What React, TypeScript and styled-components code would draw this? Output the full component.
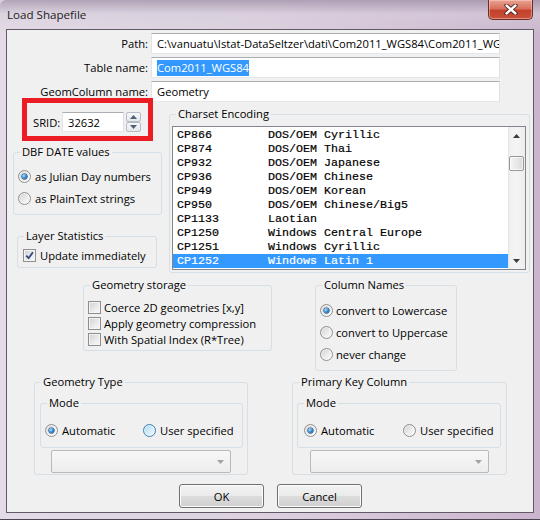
import React from 'react';
import styled, { createGlobalStyle, css } from 'styled-components';

const GlobalStyle = createGlobalStyle`
  html, body {
    margin: 0;
    padding: 0;
    background: #d9cfdc;
  }
  body {
    font-family: "Open Sans", "Noto Sans", "Liberation Sans", sans-serif;
    font-size: 11.2px;
    color: #000;
  }
  * {
    box-sizing: border-box;
  }
`;

const Window = styled.div`
  width: 540px;
  height: 520px;
  display: flex;
  flex-direction: column;
  padding: 0 6px 6px;
  border-bottom: 1px solid #4d4452;
  border-top-left-radius: 6px;
  background:
    linear-gradient(180deg, rgba(160, 145, 168, 0.75) 0, rgba(214, 206, 218, 0.55) 14px, rgba(0, 0, 0, 0) 34px),
    linear-gradient(90deg, #e4dbe7 0, #dcd0df 50%, #cbb5ce 100%);
`;

const TitleBar = styled.div`
  height: 29px;
  flex: none;
  display: flex;
  align-items: flex-start;
  justify-content: space-between;
`;

const Title = styled.span`
  margin: 7px 0 0 1px;
  font-size: 11.6px;
  line-height: 16px;
  color: #1b1b1b;
`;

const CloseButton = styled.div`
  width: 45px;
  height: 20px;
  margin-right: 1px;
  display: flex;
  align-items: center;
  justify-content: center;
  border: 1px solid #6b2d24;
  border-top: none;
  border-radius: 0 0 5px 5px;
  background: linear-gradient(180deg, #e9a393 0, #d9705d 45%, #c2412c 55%, #c9513a 100%);
  box-shadow: inset 0 0 0 1px rgba(255, 220, 210, 0.45);
`;

const Client = styled.div`
  flex: 1;
  border: 1px solid #5f5a66;
  background: #f0f0f0;
  display: flex;
  flex-direction: column;
`;

const FormGrid = styled.div`
  display: grid;
  grid-template-columns: 141px 349px;
  grid-auto-rows: 21px;
  column-gap: 3px;
  row-gap: 3px;
  margin-top: 3px;
  align-items: center;
`;

const FieldLabel = styled.label`
  text-align: right;
  white-space: nowrap;
`;

const TextField = styled.div<{ $width?: number }>`
  height: ${p => (p.$width ? '20px' : '21px')};
  width: ${p => (p.$width ? `${p.$width}px` : 'auto')};
  display: flex;
  align-items: center;
  padding: 0 5px;
  border: 1px solid;
  border-color: #abadb3 #dbdfe6 #e3e9ef #e2e3ea;
  background: #fff;
  white-space: nowrap;
  overflow: hidden;
`;

const Selection = styled.span`
  background: #3399ff;
  color: #fff;
  line-height: 16px;
`;

const MiddleRow = styled.div`
  display: flex;
  align-items: flex-start;
`;

const LeftColumn = styled.div`
  width: 149px;
  margin-left: 6px;
  display: flex;
  flex-direction: column;
`;

const SridRow = styled.div`
  position: relative;
  height: 20px;
  margin-top: 10px;
  padding-left: 20px;
  display: flex;
  align-items: center;
`;

const SridLabel = styled.span`
  width: 29px;
`;

const Annotation = styled.div`
  position: absolute;
  left: 9px;
  top: -14px;
  width: 131px;
  height: 43px;
  border: 5px solid #ec1c24;
  pointer-events: none;
`;

const Spinner = styled.div`
  margin-left: 2px;
  width: 15px;
  height: 20px;
  display: flex;
  flex-direction: column;
`;

const SpinButton = styled.div`
  flex: 1;
  display: flex;
  align-items: center;
  justify-content: center;
  border: 1px solid #b4bcc6;
  border-radius: 2px;
  background: linear-gradient(180deg, #f8f8f8, #e4e7eb);
`;

const GroupBox = styled.fieldset<{ $width: number }>`
  margin: 0;
  padding: 0;
  min-width: 0;
  width: ${p => p.$width}px;
  border: 1px solid #d5dfe5;
  border-radius: 3px;
`;

const Legend = styled.legend`
  margin-left: 6px;
  padding: 0 2px;
  line-height: 16px;
  white-space: nowrap;
`;

const DateGroup = styled(GroupBox)`
  margin-top: 12px;
  padding-bottom: 5px;
`;

const StatsGroup = styled(GroupBox)`
  margin: 13px 0 0 4px;
  padding-bottom: 2px;
`;

const CharsetGroup = styled(GroupBox)`
  margin: 4px 0 0 7px;
  padding: 4px 0 2px;
`;

const OptionsRow = styled.div`
  display: flex;
  align-items: flex-start;
  margin: 4px 0 0 76px;
  gap: 43px;
`;

const StorageGroup = styled(GroupBox)`
  padding: 6px 0 3px;
`;

const NamesGroup = styled(GroupBox)`
  padding: 6px 0 5px;
`;

const BottomRow = styled.div`
  display: flex;
  align-items: flex-start;
  margin: 3px 0 0 27px;
  gap: 44px;
`;

const TypeGroup = styled(GroupBox)`
  padding-bottom: 1px;
`;

const ModeGroup = styled(GroupBox)<{ $inset: number }>`
  margin: 5px 0 0 ${p => p.$inset}px;
  padding: 8px 0 6px;
`;

const OptionRow = styled.div<{ $height: number; $indent?: number; $top?: number }>`
  height: ${p => p.$height}px;
  margin-top: ${p => p.$top ?? 0}px;
  padding-left: ${p => p.$indent ?? 4}px;
  display: flex;
  align-items: center;
  white-space: nowrap;
`;

const Option = styled.label<{ $width?: number; $gap?: number }>`
  display: flex;
  align-items: center;
  gap: ${p => p.$gap ?? 4}px;
  width: ${p => (p.$width ? `${p.$width}px` : 'auto')};
  white-space: nowrap;
`;

const Radio = styled.span<{ $checked?: boolean; $hot?: boolean }>`
  position: relative;
  flex: none;
  width: 13px;
  height: 13px;
  border-radius: 50%;
  border: 1px solid ${p => (p.$hot ? '#3c7fb1' : '#8e8f8f')};
  background: ${p =>
    p.$hot
      ? 'linear-gradient(135deg, #a9daf5 0, #d9effb 60%, #f1f9fe 100%)'
      : 'linear-gradient(135deg, #cfcfcf 0, #ececec 55%, #fbfbfb 100%)'};
  box-shadow: inset 0 0 0 1px rgba(255, 255, 255, 0.55);
  ${p =>
    p.$checked &&
    css`
      &::after {
        content: '';
        position: absolute;
        left: 3px;
        top: 3px;
        width: 5px;
        height: 5px;
        border-radius: 50%;
        background: radial-gradient(circle at 35% 35%, #b4e6ff 0, #2b8ad6 50%, #0b3f86 100%);
        box-shadow: 0 0 0 0.6px #12406f;
      }
    `}
`;

const CheckBox = styled.span`
  flex: none;
  width: 13px;
  height: 13px;
  display: flex;
  align-items: center;
  justify-content: center;
  border: 1px solid #8e8f8f;
  background: linear-gradient(135deg, #cdd0d4 0, #eaeaea 55%, #f8f8f8 100%);
  box-shadow: inset 0 0 0 1px #f4f4f4;
`;

const ListBox = styled.div`
  width: 354px;
  height: 144px;
  margin-left: 2px;
  display: flex;
  border: 1px solid #828790;
  background: #fff;
`;

const ListRows = styled.div`
  flex: 1;
  padding-top: 1px;
  font-family: "Liberation Mono", "Courier New", monospace;
  font-size: 11.67px;
  -webkit-text-stroke: 0.2px currentColor;
`;

const ListRow = styled.div<{ $selected?: boolean }>`
  display: grid;
  grid-template-columns: 91px 1fr;
  height: 14px;
  line-height: 14px;
  padding-left: 4px;
  white-space: pre;
  ${p =>
    p.$selected &&
    css`
      background: #3399ff;
      color: #fff;
    `}
`;

const ScrollBar = styled.div`
  width: 17px;
  display: flex;
  flex-direction: column;
  background: linear-gradient(90deg, #e2e2e2 0, #f1f1f1 2px, #f4f4f4 50%, #ededed 100%);
`;

const ScrollArrow = styled.div`
  height: 17px;
  display: flex;
  align-items: center;
  justify-content: center;
`;

const ScrollThumb = styled.div`
  height: 15px;
  margin: 12px 1px 0;
  border: 1px solid #979797;
  border-radius: 2px;
  background: linear-gradient(90deg, #f4f4f4 0, #e8e8e8 50%, #d9d9d9 100%);
  box-shadow: inset 0 0 0 1px rgba(255, 255, 255, 0.7);
`;

const ScrollTrack = styled.div`
  flex: 1;
`;

const ComboBox = styled.div<{ $left: number; $width: number }>`
  width: ${p => p.$width}px;
  height: 23px;
  margin: 2px 0 0 ${p => p.$left}px;
  display: flex;
  align-items: center;
  justify-content: flex-end;
  padding-right: 6px;
  border: 1px solid #b9b9b9;
  border-radius: 2px;
  background: linear-gradient(180deg, #f7f7f7, #ededed);
`;

const ButtonRow = styled.div`
  display: flex;
  gap: 13px;
  margin: 9px 0 0 172px;
`;

const Button = styled.div`
  width: 85px;
  height: 24px;
  display: flex;
  align-items: center;
  justify-content: center;
  border: 1px solid #707070;
  border-radius: 3px;
  background: linear-gradient(180deg, #f2f2f2 0, #ebebeb 50%, #dddddd 50%, #cfcfcf 100%);
  box-shadow: inset 0 0 0 1px #fcfcfc;
`;

const Triangle = ({ up, color }: { up?: boolean; color: string }) => (
  <svg width="7" height="4" viewBox="0 0 7 4">
    <polygon points={up ? '0,4 3.5,0 7,4' : '0,0 7,0 3.5,4'} fill={color} />
  </svg>
);

const charsets: [string, string][] = [
  ['CP866', 'DOS/OEM Cyrillic'],
  ['CP874', 'DOS/OEM Thai'],
  ['CP932', 'DOS/OEM Japanese'],
  ['CP936', 'DOS/OEM Chinese'],
  ['CP949', 'DOS/OEM Korean'],
  ['CP950', 'DOS/OEM Chinese/Big5'],
  ['CP1133', 'Laotian'],
  ['CP1250', 'Windows Central Europe'],
  ['CP1251', 'Windows Cyrillic'],
  ['CP1252', 'Windows Latin 1'],
];

export default function App() {
  return (
    <>
      <GlobalStyle />
      <Window>
        <TitleBar>
          <Title>Load Shapefile</Title>
          <CloseButton>
            <svg width="14" height="11" viewBox="0 0 14 11">
              <path d="M2.5 1.5 L11.5 9.5 M11.5 1.5 L2.5 9.5" stroke="#4a1e18" strokeWidth="4.2" strokeLinecap="round" />
              <path d="M2.5 1.5 L11.5 9.5 M11.5 1.5 L2.5 9.5" stroke="#fff" strokeWidth="2.4" strokeLinecap="round" />
            </svg>
          </CloseButton>
        </TitleBar>
        <Client>
          <FormGrid>
            <FieldLabel>Path:</FieldLabel>
            <TextField>{'C:\\vanuatu\\Istat-DataSeltzer\\dati\\Com2011_WGS84\\Com2011_WGS84.shp'}</TextField>
            <FieldLabel>Table name:</FieldLabel>
            <TextField>
              <Selection>Com2011_WGS84</Selection>
            </TextField>
            <FieldLabel>GeomColumn name:</FieldLabel>
            <TextField>Geometry</TextField>
          </FormGrid>

          <MiddleRow>
            <LeftColumn>
              <SridRow>
                <SridLabel>SRID:</SridLabel>
                <TextField $width={62}>32632</TextField>
                <Spinner>
                  <SpinButton>
                    <Triangle up color="#4c607a" />
                  </SpinButton>
                  <SpinButton>
                    <Triangle color="#4c607a" />
                  </SpinButton>
                </Spinner>
                <Annotation />
              </SridRow>

              <DateGroup $width={149}>
                <Legend>DBF DATE values</Legend>
                <OptionRow $height={22} $top={5}>
                  <Option>
                    <Radio $checked />
                    as Julian Day numbers
                  </Option>
                </OptionRow>
                <OptionRow $height={22}>
                  <Option>
                    <Radio />
                    as PlainText strings
                  </Option>
                </OptionRow>
              </DateGroup>

              <StatsGroup $width={140}>
                <Legend>Layer Statistics</Legend>
                <OptionRow $height={20} $top={1} $indent={5}>
                  <Option>
                    <CheckBox>
                      <svg width="9" height="9" viewBox="0 0 9 9">
                        <path d="M1.2 4.6 L3.6 7.2 L7.9 1.3" fill="none" stroke="#34487c" strokeWidth="1.8" />
                      </svg>
                    </CheckBox>
                    Update immediately
                  </Option>
                </OptionRow>
              </StatsGroup>
            </LeftColumn>

            <CharsetGroup $width={361}>
              <Legend>Charset Encoding</Legend>
              <ListBox>
                <ListRows>
                  {charsets.map(([code, name], i) => (
                    <ListRow key={code} $selected={i === charsets.length - 1}>
                      <span>{code}</span>
                      <span>{name}</span>
                    </ListRow>
                  ))}
                </ListRows>
                <ScrollBar>
                  <ScrollArrow>
                    <Triangle up color="#3c3c3c" />
                  </ScrollArrow>
                  <ScrollThumb />
                  <ScrollTrack />
                  <ScrollArrow>
                    <Triangle color="#3c3c3c" />
                  </ScrollArrow>
                </ScrollBar>
              </ListBox>
            </CharsetGroup>
          </MiddleRow>

          <OptionsRow>
            <StorageGroup $width={189}>
              <Legend>Geometry storage</Legend>
              {['Coerce 2D geometries [x,y]', 'Apply geometry compression', 'With Spatial Index (R*Tree)'].map(t => (
                <OptionRow key={t} $height={16}>
                  <Option $gap={3}>
                    <CheckBox />
                    {t}
                  </Option>
                </OptionRow>
              ))}
            </StorageGroup>

            <NamesGroup $width={142}>
              <Legend>Column Names</Legend>
              {['convert to Lowercase', 'convert to Uppercase', 'never change'].map((t, i) => (
                <OptionRow key={t} $height={22}>
                  <Option $gap={3}>
                    <Radio $checked={i === 0} />
                    {t}
                  </Option>
                </OptionRow>
              ))}
            </NamesGroup>
          </OptionsRow>

          <BottomRow>
            <TypeGroup $width={214}>
              <Legend>Geometry Type</Legend>
              <ModeGroup $width={203} $inset={5}>
                <Legend>Mode</Legend>
                <OptionRow $height={22}>
                  <Option $width={98}>
                    <Radio $checked />
                    Automatic
                  </Option>
                  <Option>
                    <Radio $hot />
                    User specified
                  </Option>
                </OptionRow>
              </ModeGroup>
              <ComboBox $left={16} $width={180}>
                <Triangle color="#a3a3a3" />
              </ComboBox>
            </TypeGroup>

            <TypeGroup $width={215}>
              <Legend>Primary Key Column</Legend>
              <ModeGroup $width={204} $inset={4}>
                <Legend>Mode</Legend>
                <OptionRow $height={22} $indent={6}>
                  <Option $width={99}>
                    <Radio $checked />
                    Automatic
                  </Option>
                  <Option>
                    <Radio />
                    User specified
                  </Option>
                </OptionRow>
              </ModeGroup>
              <ComboBox $left={17} $width={179}>
                <Triangle color="#a3a3a3" />
              </ComboBox>
            </TypeGroup>
          </BottomRow>

          <ButtonRow>
            <Button>OK</Button>
            <Button>Cancel</Button>
          </ButtonRow>
        </Client>
      </Window>
    </>
  );
}
